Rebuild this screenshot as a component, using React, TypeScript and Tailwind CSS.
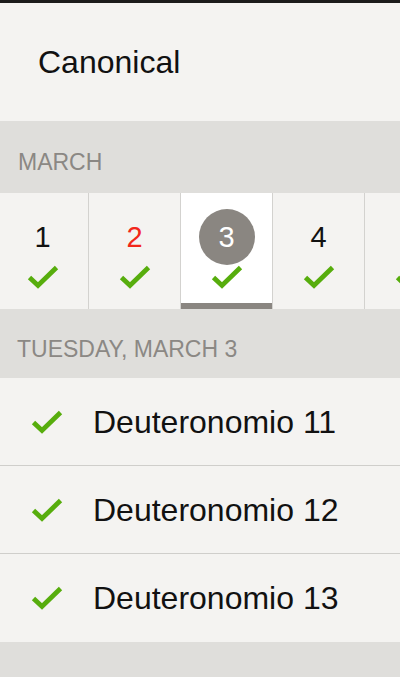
import React from "react";

const days = [
  { n: 1, red: false },
  { n: 2, red: true },
  { n: 3, selected: true },
  { n: 4 },
  { n: 5 },
];

const readings = ["Deuteronomio 11", "Deuteronomio 12", "Deuteronomio 13"];

function Check({ className = "" }: { className?: string }) {
  return (
    <svg viewBox="0 0 32 24" className={className} fill="none">
      <path
        d="M2.5 12.5 L11 20.5 L29.5 2.5"
        stroke="#57ad0d"
        strokeWidth="4.8"
        strokeLinecap="butt"
        strokeLinejoin="miter"
      />
    </svg>
  );
}

export default function App() {
  return (
    <div
      className="w-[400px] h-[677px] overflow-hidden bg-[#dfdedb] flex flex-col"
      style={{ fontFamily: '"Liberation Sans", Arial, sans-serif' }}
    >
      {/* Status strip */}
      <div className="h-[3px] bg-[#1c1b1b] shrink-0" />

      {/* Title */}
      <div className="h-[118px] bg-[#f4f3f1] flex items-center pl-[38px] shrink-0">
        <span className="text-[32px] text-[#111] leading-none -mt-[1px]">Canonical</span>
      </div>

      {/* Month header */}
      <div className="h-[72px] flex items-center pl-[18px] pt-[10px] shrink-0">
        <span className="text-[23px] text-[#8b8884] leading-none">MARCH</span>
      </div>

      {/* Day strip */}
      <div className="h-[116px] bg-[#f4f3f1] flex ml-[-3px] shrink-0">
        {days.map((d) => (
          <div
            key={d.n}
            className={`relative w-[92px] shrink-0 border-r border-[#d3d2cf] flex flex-col items-center pt-[16px] ${
              d.selected ? "bg-white" : ""
            }`}
          >
            <div
              className={`w-[56px] h-[56px] rounded-full flex items-center justify-center text-[29px] leading-none ${
                d.selected ? "bg-[#8a8681] text-white" : d.red ? "text-[#f2271b]" : "text-[#111]"
              }`}
            >
              {d.n}
            </div>
            <Check className="w-[32px] h-[24px]" />
            {d.selected && (
              <div className="absolute left-0 right-0 bottom-0 h-[6px] bg-[#8a8681]" />
            )}
          </div>
        ))}
      </div>

      {/* Day header */}
      <div className="h-[69px] flex items-center pl-[17px] shrink-0">
        <span className="text-[23px] text-[#8b8884] leading-none mt-[11px]">
          TUESDAY, MARCH 3
        </span>
      </div>

      {/* Readings */}
      <div className="bg-[#f4f3f1] shrink-0">
        {readings.map((r, i) => (
          <div
            key={r}
            className={`h-[88px] flex items-center ${
              i < readings.length - 1 ? "border-b border-[#cfcecb]" : ""
            }`}
          >
            <Check className="w-[32px] h-[24px] ml-[31px]" />
            <span className="ml-[30px] text-[32px] text-[#111] leading-none">{r}</span>
          </div>
        ))}
      </div>
    </div>
  );
}
